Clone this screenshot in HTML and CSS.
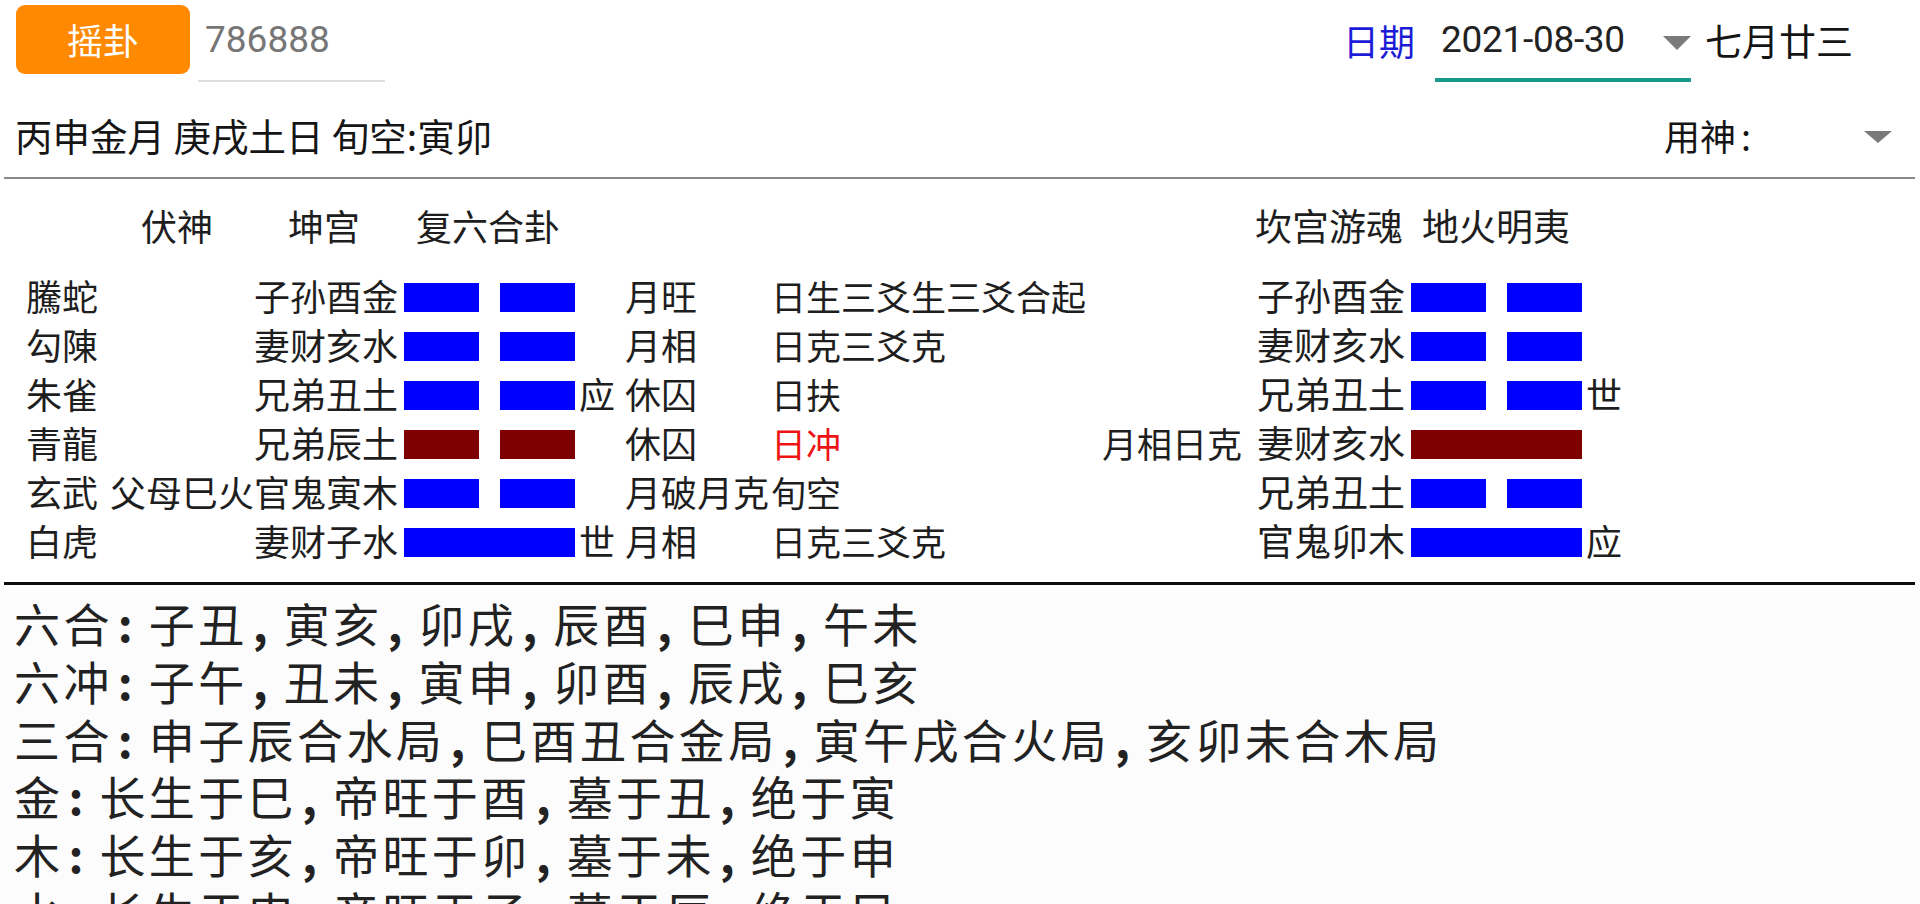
FILE: index.html
```html
<!DOCTYPE html>
<html lang="zh-CN">
<head>
<meta charset="utf-8">
<title>六爻排盘</title>
<link rel="stylesheet" href="styles.css">
</head>
<body>
<div class="app">
  <div class="topbar">
    <button class="shake">摇卦</button>
    <div class="num">786888</div>
    <div class="spacer"></div>
    <span class="date-label">日期</span>
    <div class="spinner">
      <span class="date">2021-08-30</span>
      <span class="tri tri-date"></span>
    </div>
    <span class="lunar">七月廿三</span>
  </div>

  <div class="infobar">
    <span class="ganzhi">丙申金月 庚戌土日 旬空:寅卯</span>
    <span class="spacer"></span>
    <span class="yongshen">用神<span class="colon">:</span></span>
    <span class="tri tri-ys"></span>
  </div>

  <div class="sep"></div>

  <div class="gua">
    <div class="head">
      <span class="h1">伏神</span>
      <span class="h2">坤宫</span>
      <span class="h3">复六合卦</span>
      <span class="h4">坎宫游魂<span class="gap"></span>地火明夷</span>
    </div>

    <div class="row">
      <span class="c-god">騰蛇</span><span class="c-fu"></span><span class="c-name">子孙酉金</span>
      <span class="bar yin blue"><i></i><i></i></span><span class="mark"></span>
      <span class="c-state">月旺</span><span class="c-rel">日生三爻生三爻合起</span>
      <span class="c-note"></span><span class="c-name2">子孙酉金</span>
      <span class="bar yin blue"><i></i><i></i></span><span class="mark"></span>
    </div>
    <div class="row">
      <span class="c-god">勾陳</span><span class="c-fu"></span><span class="c-name">妻财亥水</span>
      <span class="bar yin blue"><i></i><i></i></span><span class="mark"></span>
      <span class="c-state">月相</span><span class="c-rel">日克三爻克</span>
      <span class="c-note"></span><span class="c-name2">妻财亥水</span>
      <span class="bar yin blue"><i></i><i></i></span><span class="mark"></span>
    </div>
    <div class="row">
      <span class="c-god">朱雀</span><span class="c-fu"></span><span class="c-name">兄弟丑土</span>
      <span class="bar yin blue"><i></i><i></i></span><span class="mark">应</span>
      <span class="c-state">休囚</span><span class="c-rel">日扶</span>
      <span class="c-note"></span><span class="c-name2">兄弟丑土</span>
      <span class="bar yin blue"><i></i><i></i></span><span class="mark">世</span>
    </div>
    <div class="row">
      <span class="c-god">青龍</span><span class="c-fu"></span><span class="c-name">兄弟辰土</span>
      <span class="bar yin red"><i></i><i></i></span><span class="mark"></span>
      <span class="c-state">休囚</span><span class="c-rel alert">日冲</span>
      <span class="c-note">月相日克</span><span class="c-name2">妻财亥水</span>
      <span class="bar yang red"><i></i></span><span class="mark"></span>
    </div>
    <div class="row">
      <span class="c-god">玄武</span><span class="c-fu">父母巳火</span><span class="c-name">官鬼寅木</span>
      <span class="bar yin blue"><i></i><i></i></span><span class="mark"></span>
      <span class="c-state">月破月克</span><span class="c-rel">旬空</span>
      <span class="c-note"></span><span class="c-name2">兄弟丑土</span>
      <span class="bar yin blue"><i></i><i></i></span><span class="mark"></span>
    </div>
    <div class="row">
      <span class="c-god">白虎</span><span class="c-fu"></span><span class="c-name">妻财子水</span>
      <span class="bar yang blue"><i></i></span><span class="mark">世</span>
      <span class="c-state">月相</span><span class="c-rel">日克三爻克</span>
      <span class="c-note"></span><span class="c-name2">官鬼卯木</span>
      <span class="bar yang blue"><i></i></span><span class="mark">应</span>
    </div>
  </div>

  <div class="thick"></div>

  <div class="notes">
    <div class="line">六合<span class="p">:</span>子丑<span class="p">,</span>寅亥<span class="p">,</span>卯戌<span class="p">,</span>辰酉<span class="p">,</span>巳申<span class="p">,</span>午未</div>
    <div class="line">六冲<span class="p">:</span>子午<span class="p">,</span>丑未<span class="p">,</span>寅申<span class="p">,</span>卯酉<span class="p">,</span>辰戌<span class="p">,</span>巳亥</div>
    <div class="line">三合<span class="p">:</span>申子辰合水局<span class="p">,</span>巳酉丑合金局<span class="p">,</span>寅午戌合火局<span class="p">,</span>亥卯未合木局</div>
    <div class="line">金<span class="p">:</span>长生于巳<span class="p">,</span>帝旺于酉<span class="p">,</span>墓于丑<span class="p">,</span>绝于寅</div>
    <div class="line">木<span class="p">:</span>长生于亥<span class="p">,</span>帝旺于卯<span class="p">,</span>墓于未<span class="p">,</span>绝于申</div>
    <div class="line">水<span class="p">:</span>长生于申<span class="p">,</span>帝旺于子<span class="p">,</span>墓于辰<span class="p">,</span>绝于巳</div>
  </div>
</div>
</body>
</html>
```

FILE: styles.css
```css
* { box-sizing: border-box; }
html, body { margin: 0; padding: 0; background: #ffffff; }
body {
  font-family: "Noto Sans CJK SC", sans-serif;
  color: #1e1e1e;
  width: 1920px;
  height: 904px;
  overflow: hidden;
}
.app { width: 1920px; }

/* top bar */
.topbar {
  display: flex;
  align-items: flex-start;
  height: 88px;
  padding: 5px 67px 0 16px;
}
.spacer { flex: 1; }
.shake {
  width: 174px;
  height: 69px;
  border: none;
  border-radius: 9px;
  background: #ff8900;
  color: #ffffff;
  font-family: "Noto Sans CJK SC", sans-serif;
  font-size: 36px;
  line-height: 69px;
  padding: 0;
}
.num {
  margin-left: 8px;
  width: 187px;
  height: 77px;
  border-bottom: 2px solid #dedede;
  padding-left: 7px;
  font-family: Roboto, sans-serif;
  font-size: 37px;
  line-height: 70px;
  color: #767676;
}
.date-label {
  font-size: 36px;
  line-height: 70px;
  color: #1c1cd8;
}
.spinner {
  margin-left: 20px;
  width: 256px;
  height: 77px;
  border-bottom: 4px solid #17988a;
  display: flex;
  align-items: flex-start;
  padding-left: 6px;
}
.date {
  flex: 1;
  font-family: Roboto, sans-serif;
  font-size: 37px;
  line-height: 70px;
  color: #222222;
  letter-spacing: -0.3px;
}
.tri {
  width: 0;
  height: 0;
  border-style: solid;
  border-color: #7a7a7a transparent transparent transparent;
}
.tri-date {
  border-width: 14px 14.5px 0 14.5px;
  margin-top: 31px;
}
.lunar {
  margin-left: 14px;
  font-size: 37px;
  line-height: 70px;
  color: #151515;
}

/* info bar */
.infobar {
  display: flex;
  align-items: center;
  height: 88px;
  padding: 6px 28px 0 15px;
}
.ganzhi {
  font-size: 37.5px;
  line-height: 50px;
  color: #151515;
}
.yongshen {
  font-size: 36px;
  line-height: 50px;
  color: #151515;
}
.colon { margin-left: 5px; }
.tri-ys {
  border-width: 12px 14px 0 14px;
  margin-left: 113px;
  margin-top: 4px;
}

.sep {
  height: 2px;
  margin: 1px 5px 0 4px;
  background: #8a8a8a;
}

/* gua table */
.gua {
  padding-top: 21px;
  padding-bottom: 17px;
  font-size: 36px;
  color: #1e1e1e;
}
.head {
  display: flex;
  align-items: center;
  height: 49px;
  white-space: nowrap;
}
.h1 { margin-left: 141px; width: 147px; }
.h2 { width: 128px; }
.h3 { width: 839px; }
.h4 { font-size: 37px; }
.gap { display: inline-block; width: 19px; }

.row {
  display: flex;
  align-items: center;
  height: 49px;
  padding-left: 26px;
  white-space: nowrap;
}
.head + .row { margin-top: 22px; }
.row > span { flex-shrink: 0; line-height: 49px; }
.c-god { width: 84px; }
.c-fu { width: 144px; }
.c-name { width: 144px; text-align: right; }
.c-state { width: 146px; }
.c-rel { width: 329px; font-size: 35px; }
.c-note { width: 154px; padding-left: 2px; font-size: 35px; }
.c-name2 { width: 151px; text-align: right; font-size: 37px; }
.alert { color: #ee1414; }

.bar {
  display: flex;
  justify-content: space-between;
  width: 171px;
  height: 29px;
  margin-left: 6px;
  margin-top: 4px;
}
.row > .bar { line-height: 29px; }
.bar i { display: block; height: 29px; width: 75px; }
.bar.yang i { width: 171px; }
.bar.blue i { background: #0000ff; }
.bar.red i { background: #7f0000; }
.mark { width: 50px; padding-left: 4px; }

.thick {
  height: 3px;
  margin: 0 5px 0 4px;
  background: #0c0c0c;
}

/* notes */
.notes {
  background: #fcfcfc;
  padding: 9px 0 0 14px;
  height: 320px;
  font-size: 46px;
  line-height: 57.8px;
  color: #222222;
  letter-spacing: 3.4px;
}
.line { white-space: nowrap; }
.p {
  display: inline-block;
  width: 36px;
  padding-left: 5px;
  letter-spacing: 0;
  font-weight: bold;
}
```
